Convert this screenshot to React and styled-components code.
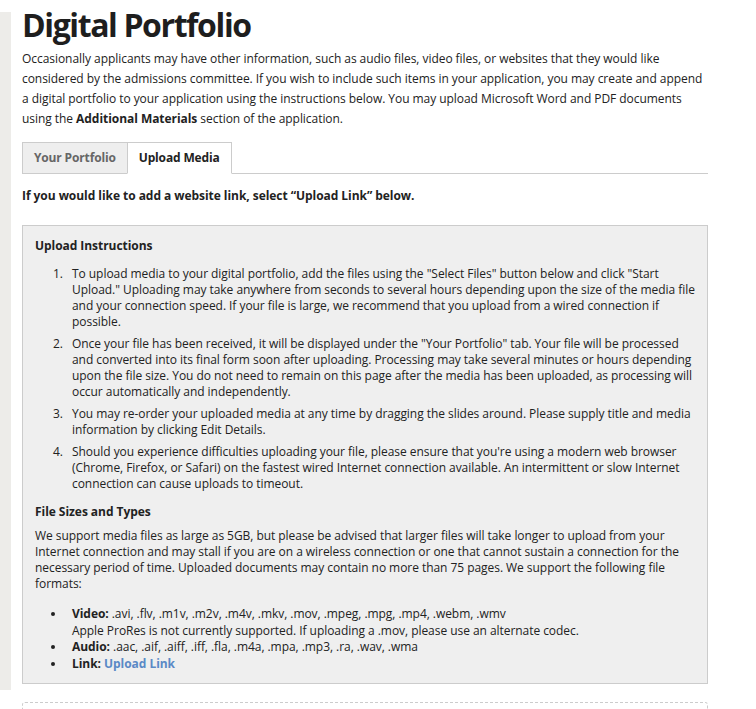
import React from "react";
import styled, {createGlobalStyle} from "styled-components";

const Global = createGlobalStyle`
    body {
        margin: 0;
        background: #fff;
        font-family: "Open Sans", "DejaVu Sans", sans-serif;
        color: #222;
        letter-spacing: -0.05px;
    }
`

const Page = styled.div`
    display: flex;
    align-items: flex-start;
    width: 756px;
    height: 709px;
    overflow: hidden;
`

const Strip = styled.div`
    width: 11px;
    height: 678px;
    margin-top: 12px;
    background-color: #edece9;
    flex-shrink: 0;
`

const Main = styled.main`
    width: 686px;
    margin-left: 11px;
`

const Title = styled.h1`
    margin: 5px 0 0;
    font-size: 32px;
    line-height: 40px;
    font-weight: 700;
    letter-spacing: -1.4px;
    color: #1e1e1e;
`

const Intro = styled.p`
    margin: 4px 0 0;
    font-size: 12px;
    line-height: 20px;
`

const TabList = styled.div`
    display: flex;
    margin-top: 13px;
    border-bottom: 1px solid #ccc;
`

const Tab = styled.div`
    height: 30px;
    line-height: 30px;
    padding: 0 11px;
    margin-bottom: -1px;
    border: 1px solid #ccc;
    font-size: 12px;
    font-weight: 700;
    letter-spacing: -0.15px;
    background-color: ${p => p.$active ? "#fff" : "#eee"};
    border-bottom-color: ${p => p.$active ? "#fff" : "#ccc"};
    color: ${p => p.$active ? "#222" : "#666"};

    & + & {
        margin-left: -1px;
    }
`

const Notice = styled.p`
    margin: 12px 0 0;
    font-size: 12px;
    line-height: 20px;
    font-weight: 700;
`

const Box = styled.section`
    margin-top: 19px;
    padding: 12px 12px 10px;
    border: 1px solid #ccc;
    background-color: #efefef;
    font-size: 12px;
    line-height: 16px;
`

const BoxTitle = styled.h3`
    margin: 0;
    font-size: 12px;
    line-height: 16px;
    font-weight: 700;
`

const Steps = styled.ol`
    margin: 12px 0 0;
    padding-left: 31px;

    li {
        padding-left: 6px;
    }

    li + li {
        margin-top: 6px;
    }
`

const Section = styled(BoxTitle)`
    margin-top: 12px;
`

const Text = styled.p`
    margin: 8px 0 0;
`

const Formats = styled.ul`
    margin: 14px 0 0;
    padding-left: 31px;
    line-height: 16.7px;

    li {
        padding-left: 6px;
    }
`

const Link = styled.a`
    color: #5a89c6;
    font-weight: 700;
    text-decoration: none;
`

const Dashed = styled.div`
    margin-top: 18px;
    height: 60px;
    border: 1px dashed #ccc;
    border-radius: 3px;
`

export default function App() {

    return (
        <Page>
            <Global/>
            <Strip/>

            <Main>
                <Title>Digital Portfolio</Title>

                <Intro>
                    Occasionally applicants may have other information, such as audio files, video files, or websites that they would like
                    considered by the admissions committee. If you wish to include such items in your application, you may create and append
                    a digital portfolio to your application using the instructions below. You may upload Microsoft Word and PDF documents
                    using the <b>Additional Materials</b> section of the application.
                </Intro>

                <TabList>
                    <Tab>Your Portfolio</Tab>
                    <Tab $active>Upload Media</Tab>
                </TabList>

                <Notice>If you would like to add a website link, select “Upload Link” below.</Notice>

                <Box>
                    <BoxTitle>Upload Instructions</BoxTitle>

                    <Steps>
                        <li>To upload media to your digital portfolio, add the files using the "Select Files" button below and click "Start Upload." Uploading may take anywhere from seconds to several hours depending upon the size of the media file and your connection speed. If your file is large, we recommend that you upload from a wired connection if possible.</li>
                        <li>Once your file has been received, it will be displayed under the "Your Portfolio" tab. Your file will be processed and converted into its final form soon after uploading. Processing may take several minutes or hours depending upon the file size. You do not need to remain on this page after the media has been uploaded, as processing will occur automatically and independently.</li>
                        <li>You may re-order your uploaded media at any time by dragging the slides around. Please supply title and media information by clicking Edit Details.</li>
                        <li>Should you experience difficulties uploading your file, please ensure that you're using a modern web browser (Chrome, Firefox, or Safari) on the fastest wired Internet connection available. An intermittent or slow Internet connection can cause uploads to timeout.</li>
                    </Steps>

                    <Section>File Sizes and Types</Section>

                    <Text>
                        We support media files as large as 5GB, but please be advised that larger files will take longer to upload from your
                        Internet connection and may stall if you are on a wireless connection or one that cannot sustain a connection for the
                        necessary period of time. Uploaded documents may contain no more than 75 pages. We support the following file formats:
                    </Text>

                    <Formats>
                        <li><b>Video:</b> .avi, .flv, .m1v, .m2v, .m4v, .mkv, .mov, .mpeg, .mpg, .mp4, .webm, .wmv<br/>
                            Apple ProRes is not currently supported. If uploading a .mov, please use an alternate codec.</li>
                        <li><b>Audio:</b> .aac, .aif, .aiff, .iff, .fla, .m4a, .mpa, .mp3, .ra, .wav, .wma</li>
                        <li><b>Link:</b> <Link href="#">Upload Link</Link></li>
                    </Formats>
                </Box>

                <Dashed/>
            </Main>
        </Page>
    )
}
